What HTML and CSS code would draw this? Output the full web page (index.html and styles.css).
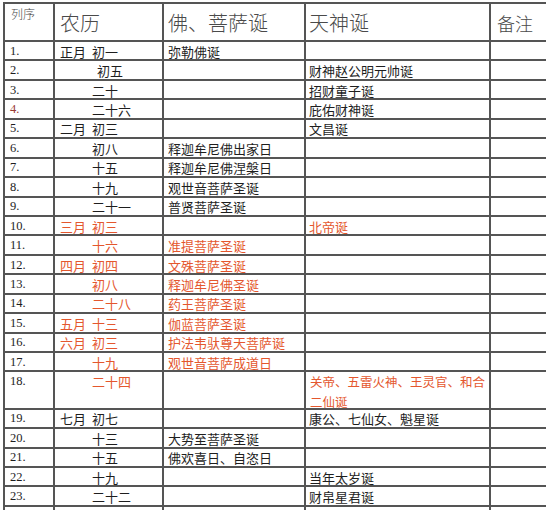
FILE: index.html
```html
<!DOCTYPE html>
<html lang="zh">
<head>
<meta charset="utf-8">
<title>诞辰表</title>
<link rel="stylesheet" href="styles.css">
</head>
<body>
<div class="sheet">
  <div class="row head">
    <div class="c c1 hsmall">列序</div>
    <div class="c c2 hbig">农历</div>
    <div class="c c3 hbig">佛、菩萨诞</div>
    <div class="c c4 hbig">天神诞</div>
    <div class="c c5 hbig hnote">备注</div>
  </div>
  <div class="row"><div class="c c1">1.</div><div class="c c2"><span class="m">正月</span>初一</div><div class="c c3">弥勒佛诞</div><div class="c c4"></div><div class="c c5"></div></div>
  <div class="row"><div class="c c1">2.</div><div class="c c2"><span class="m"></span><span class="shift">初五</span></div><div class="c c3"></div><div class="c c4">财神赵公明元帅诞</div><div class="c c5"></div></div>
  <div class="row"><div class="c c1">3.</div><div class="c c2"><span class="m"></span>二十</div><div class="c c3"></div><div class="c c4">招财童子诞</div><div class="c c5"></div></div>
  <div class="row"><div class="c c1 dim">4.</div><div class="c c2"><span class="m"></span>二十六</div><div class="c c3"></div><div class="c c4">庇佑财神诞</div><div class="c c5"></div></div>
  <div class="row"><div class="c c1">5.</div><div class="c c2"><span class="m">二月</span>初三</div><div class="c c3"></div><div class="c c4">文昌诞</div><div class="c c5"></div></div>
  <div class="row"><div class="c c1">6.</div><div class="c c2"><span class="m"></span>初八</div><div class="c c3">释迦牟尼佛出家日</div><div class="c c4"></div><div class="c c5"></div></div>
  <div class="row"><div class="c c1">7.</div><div class="c c2"><span class="m"></span>十五</div><div class="c c3">释迦牟尼佛涅槃日</div><div class="c c4"></div><div class="c c5"></div></div>
  <div class="row"><div class="c c1">8.</div><div class="c c2"><span class="m"></span>十九</div><div class="c c3">观世音菩萨圣诞</div><div class="c c4"></div><div class="c c5"></div></div>
  <div class="row"><div class="c c1">9.</div><div class="c c2"><span class="m"></span>二十一</div><div class="c c3">普贤菩萨圣诞</div><div class="c c4"></div><div class="c c5"></div></div>
  <div class="row"><div class="c c1">10.</div><div class="c c2 hot"><span class="m">三月</span>初三</div><div class="c c3"></div><div class="c c4 hot">北帝诞</div><div class="c c5"></div></div>
  <div class="row"><div class="c c1">11.</div><div class="c c2 hot"><span class="m"></span>十六</div><div class="c c3 hot">准提菩萨圣诞</div><div class="c c4"></div><div class="c c5"></div></div>
  <div class="row"><div class="c c1">12.</div><div class="c c2 hot"><span class="m">四月</span>初四</div><div class="c c3 hot">文殊菩萨圣诞</div><div class="c c4"></div><div class="c c5"></div></div>
  <div class="row"><div class="c c1">13.</div><div class="c c2 hot"><span class="m"></span>初八</div><div class="c c3 hot">释迦牟尼佛圣诞</div><div class="c c4"></div><div class="c c5"></div></div>
  <div class="row"><div class="c c1">14.</div><div class="c c2 hot"><span class="m"></span>二十八</div><div class="c c3 hot">药王菩萨圣诞</div><div class="c c4"></div><div class="c c5"></div></div>
  <div class="row"><div class="c c1">15.</div><div class="c c2 hot"><span class="m">五月</span>十三</div><div class="c c3 hot">伽蓝菩萨圣诞</div><div class="c c4"></div><div class="c c5"></div></div>
  <div class="row"><div class="c c1">16.</div><div class="c c2 hot"><span class="m">六月</span>初三</div><div class="c c3 hot">护法韦驮尊天菩萨诞</div><div class="c c4"></div><div class="c c5"></div></div>
  <div class="row"><div class="c c1">17.</div><div class="c c2 hot"><span class="m"></span>十九</div><div class="c c3 hot">观世音菩萨成道日</div><div class="c c4"></div><div class="c c5"></div></div>
  <div class="row tall"><div class="c c1">18.</div><div class="c c2 hot"><span class="m"></span>二十四</div><div class="c c3"></div><div class="c c4 hot nowrap">关帝、五雷火神、王灵官、和合<br>二仙诞</div><div class="c c5"></div></div>
  <div class="row"><div class="c c1">19.</div><div class="c c2"><span class="m">七月</span>初七</div><div class="c c3"></div><div class="c c4">康公、七仙女、魁星诞</div><div class="c c5"></div></div>
  <div class="row"><div class="c c1">20.</div><div class="c c2"><span class="m"></span>十三</div><div class="c c3">大势至菩萨圣诞</div><div class="c c4"></div><div class="c c5"></div></div>
  <div class="row"><div class="c c1">21.</div><div class="c c2"><span class="m"></span>十五</div><div class="c c3">佛欢喜日、自恣日</div><div class="c c4"></div><div class="c c5"></div></div>
  <div class="row"><div class="c c1">22.</div><div class="c c2"><span class="m"></span>十九</div><div class="c c3"></div><div class="c c4">当年太岁诞</div><div class="c c5"></div></div>
  <div class="row"><div class="c c1">23.</div><div class="c c2"><span class="m"></span>二十二</div><div class="c c3"></div><div class="c c4">财帛星君诞</div><div class="c c5"></div></div>
  <div class="row"><div class="c c1"></div><div class="c c2"></div><div class="c c3">地藏王菩萨圣诞</div><div class="c c4"></div><div class="c c5"></div></div>
</div>
</body>
</html>
```

FILE: styles.css
```css
html, body {
  margin: 0;
  padding: 0;
  overflow: hidden;
  background: #ffffff;
}

body {
  width: 546px;
  height: 510px;
}

.sheet {
  margin: 2px 0 0 3px;
  width: 558px;
  border-left: 2px solid #555;
  border-top: 2px solid #555;
  font-family: "Noto Sans CJK SC", "Noto Sans", sans-serif;
  font-size: 13px;
  color: #1e1e1e;
}

.row {
  display: grid;
  grid-template-columns: 50px 109px 142px 185px 70px;
  height: 19.45px;
}

.row.head {
  height: 38px;
}

.row.tall {
  height: 37.3px;
}

.c {
  box-sizing: border-box;
  border-right: 2px solid #555;
  border-bottom: 2px solid #555;
  padding-left: 4px;
  padding-top: 1px;
  display: flex;
  align-items: center;
  white-space: nowrap;
  overflow: hidden;
  line-height: 17px;
}

.c1 {
  font-family: "Liberation Serif", "DejaVu Serif", serif;
  font-size: 12.5px;
  padding-left: 5px;
}

.c2 {
  padding-left: 5px;
}

.c3 {
  padding-left: 4px;
}

.c4 {
  padding-left: 3px;
}

.m {
  display: inline-block;
  width: 32px;
}

.shift {
  margin-left: 5px;
}

.dim {
  color: #9a3b34;
}

.hot {
  color: #e4572e;
}

.head .c {
  color: #4a4a4a;
  font-weight: 300;
}

.hsmall {
  font-family: "Noto Sans CJK SC", sans-serif;
  font-size: 12px;
  align-items: flex-start;
  padding-top: 2px;
  padding-left: 6px;
  line-height: 15px;
}

.hbig {
  font-size: 20px;
  line-height: 24px;
  padding-top: 2px;
}

.hnote {
  font-size: 18px;
  padding-left: 6px;
}

.tall .c {
  align-items: flex-start;
  line-height: 19.5px;
  padding-top: 0;
}

.nowrap {
  font-size: 12.5px;
  padding-left: 4px;
}
```
